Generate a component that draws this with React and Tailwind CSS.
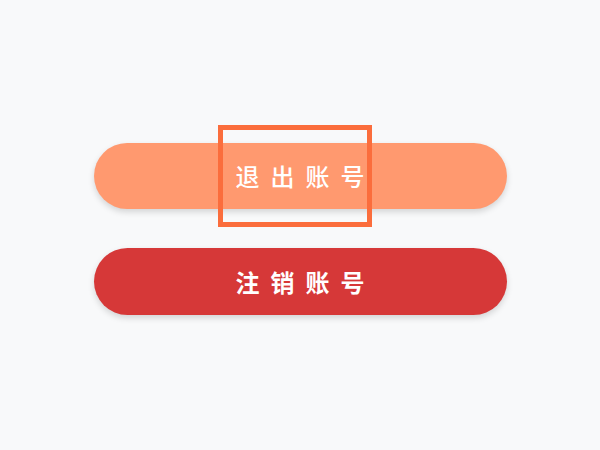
import React from "react";

const App = () => {
  return (
    <div
      className="relative w-[600px] h-[450px] bg-[#f8f9fa] overflow-hidden"
      style={{ fontFamily: '"Noto Sans CJK SC", "Noto Sans", sans-serif' }}
    >
      <div className="flex flex-col items-center pt-[143px] gap-[39px]">
        <button className="w-[413px] h-[66px] rounded-full bg-[#ff996f] text-white text-[24px] font-medium tracking-[11px] pl-[11px] shadow-[0_3px_6px_rgba(0,0,0,0.15)] flex items-center justify-center">
          退出账号
        </button>
        <button className="w-[413px] h-[67px] rounded-full bg-[#d63838] text-white text-[24px] font-semibold tracking-[11px] pl-[11px] shadow-[0_3px_6px_rgba(0,0,0,0.15)] flex items-center justify-center">
          注销账号
        </button>
      </div>

      {/* highlight box */}
      <div className="absolute left-[218px] top-[125px] w-[154px] h-[102px] border-[5px] border-[#fb6d3c]"></div>
    </div>
  );
};

export default App;
